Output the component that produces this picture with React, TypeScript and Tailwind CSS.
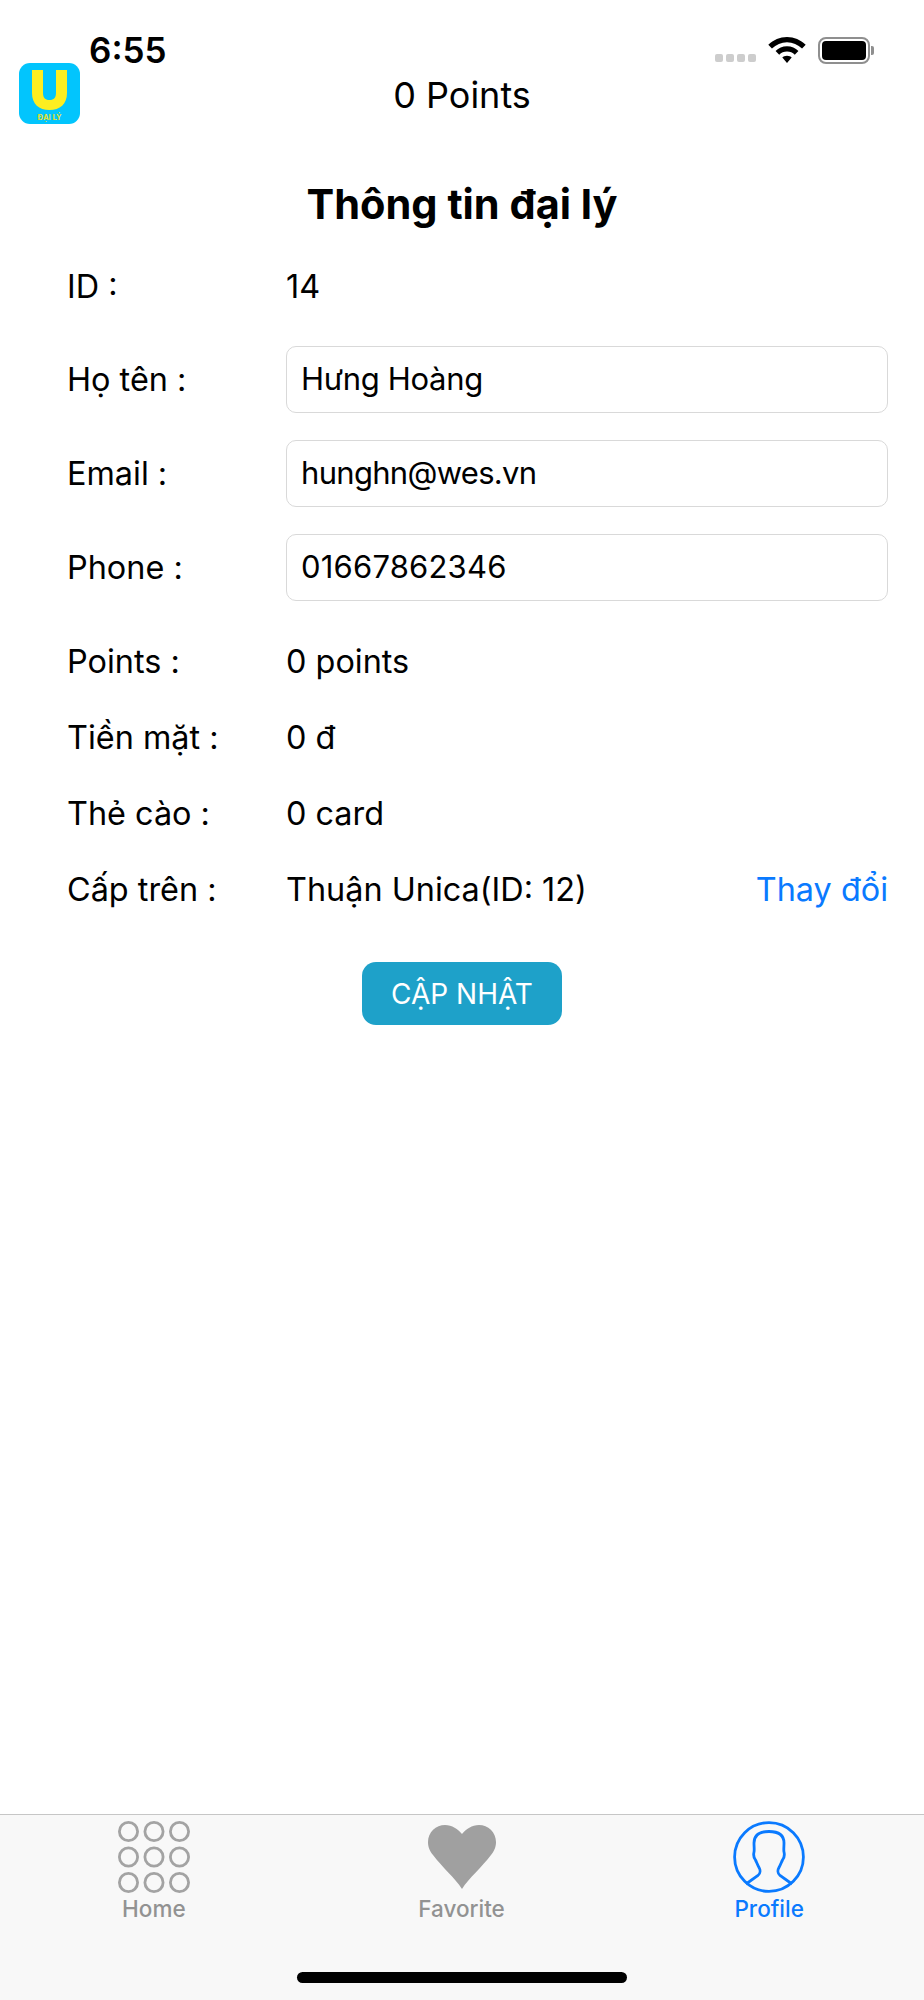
const font = { fontFamily: 'Inter, "Noto Sans", sans-serif' };

function Row({ label, children, className = "" }: { label: string; children: React.ReactNode; className?: string }) {
  return (
    <div className={`flex items-center ${className}`}>
      <div className="w-[219px] shrink-0 pl-[67px] box-content text-[32.4px] leading-[40px] text-black -mr-[67px]">{label}</div>
      <div className="ml-[67px] flex-1 flex items-center text-[32.4px] leading-[40px] text-black">{children}</div>
    </div>
  );
}

function Field({ value, className = "" }: { value: string; className?: string }) {
  return (
    <div className={`w-[602px] h-[67px] border border-[#d9d9d9] rounded-[10px] pl-[14px] pb-[2px] flex items-center bg-white text-[31px] text-black ${className}`}>{value}</div>
  );
}

function HomeIcon() {
  const c = [0, 1, 2];
  return (
    <svg width="72" height="72" viewBox="0 0 72 72" fill="none" stroke="#a3a3a3" strokeWidth="2.8">
      {c.map((r) => c.map((k) => <circle key={`${r}${k}`} cx={10.5 + k * 25.5} cy={10.5 + r * 25.5} r="9.1" />))}
    </svg>
  );
}

function HeartIcon() {
  return (
    <svg width="68" height="64" viewBox="0 0 68 64" fill="#a0a0a0">
      <path d="M34 64C27 53 14 42 5 30C1 25 0 21 0 17C0 7 8 0 17 0C24 0 30 4 34 9C38 4 44 0 51 0C60 0 68 7 68 17C68 21 67 25 63 30C54 42 41 53 34 64Z" />
    </svg>
  );
}

function ProfileIcon() {
  return (
    <svg width="72" height="72" viewBox="0 0 72 72" fill="none" stroke="#0a7aff" strokeWidth="2.8">
      <circle cx="36" cy="36" r="34.4" />
      <path d="M13 63L25 54.5C27.5 52.5 27.5 49 26 46.5C24.5 44 23.5 41 22.5 39C21 37 20.5 33 21 31C21.5 29 21 26 21 22C21 14 26 10.5 36 10.5C46 10.5 51 14 51 22C51 26 50.5 29 51 31C51.5 33 51 37 49.5 39C48.5 41 47.5 44 46 46.5C44.5 49 44.5 52.5 47 54.5L59 63" />
    </svg>
  );
}

function Tab({ icon, label, active = false }: { icon: React.ReactNode; label: string; active?: boolean }) {
  return (
    <div className="flex-1 flex flex-col items-center">
      <div className="h-[72px] flex items-center justify-center">{icon}</div>
      <div className={`mt-[3px] text-[22.5px] leading-[26px] font-medium ${active ? "text-[#0a7aff]" : "text-[#929292]"}`}>{label}</div>
    </div>
  );
}

export default function App() {
  return (
    <div style={font} className="w-[924px] h-[2000px] bg-white flex flex-col overflow-hidden">
      <div className="h-[63px] shrink-0 flex justify-between pl-[89px] pr-[50px]">
        <div className="mt-[28px] text-[35px] leading-[44px] font-semibold text-black h-[35px]">6:55</div>
        <div className="mt-[34px] flex items-center h-[32px] gap-[12px]">
          <div className="flex gap-[3px] mt-[16px]">
            {[0, 1, 2, 3].map((i) => <div key={i} className="w-[8px] h-[8px] rounded-[2px] bg-[#cdcdcd]" />)}
          </div>
          <svg width="38" height="27" viewBox="0 0 36 26" fill="black">
            <path d="M18 0C11 0 5 2.800 0 7.500L3.500 11C7.500 7.300 12.500 5 18 5C23.500 5 28.500 7.300 32.500 11L36 7.500C31 2.800 25 0 18 0Z" />
            <path d="M18 9C13.500 9 10 10.700 7 13.500L10.500 17C12.500 15.200 15 14 18 14C21 14 23.500 15.200 25.500 17L29 13.500C26 10.700 22.500 9 18 9Z" />
            <path d="M18 18C16 18 14.500 18.700 13.500 19.800L18 25L22.500 19.800C21.500 18.700 20 18 18 18Z" />
          </svg>
          <div className="flex items-center">
            <div className="w-[52px] h-[27px] border-[2px] border-[#8f8f8f] rounded-[8px] p-[2px]">
              <div className="w-full h-full bg-black rounded-[4px]" />
            </div>
            <div className="w-[3px] h-[9px] bg-[#8f8f8f] rounded-r-[2px] ml-[1px]" />
          </div>
        </div>
      </div>

      <div className="h-[61px] shrink-0 relative flex items-center pl-[19px]">
        <svg width="61" height="61" viewBox="0 0 61 61">
          <rect width="61" height="61" rx="11" fill="#02c5fd" />
          <path d="M13 7V30C13 41 20 47 30.500 47C41 47 48 41 48 30V7H37V30C37 34.500 35 37 30.500 37C26 37 24 34.500 24 30V7Z" fill="#fdee21" />
          <text x="30.500" y="57" textAnchor="middle" fontSize="7.500" fontWeight="700" fill="#e6e02a">ĐẠI LÝ</text>
        </svg>
        <div className="absolute left-0 right-0 top-0 text-center text-[36px] leading-[64px] text-black">0 Points</div>
      </div>

      <h1 className="mt-[56px] text-center text-[41.5px] leading-[48px] font-bold text-black">Thông tin đại lý</h1>

      <div className="mt-[29px] flex flex-col">
        <Row label="ID :" className="h-[60px]">14</Row>
        <Row label="Họ tên :" className="mt-[29px]"><Field value="Hưng Hoàng" className="tracking-[-0.3px]" /></Row>
        <Row label="Email :" className="mt-[27px]"><Field value="hunghn@wes.vn" className="tracking-[-0.7px]" /></Row>
        <Row label="Phone :" className="mt-[27px]"><Field value="01667862346" className="tracking-[0.2px]" /></Row>
        <Row label="Points :" className="mt-[31px] h-[60px]">0 points</Row>
        <Row label="Tiền mặt :" className="mt-[16px] h-[60px]">0 đ</Row>
        <Row label="Thẻ cào :" className="mt-[16px] h-[60px]">0 card</Row>
        <Row label="Cấp trên :" className="mt-[16px] h-[60px]">
          <span>Thuận Unica(ID: 12)</span>
          <span className="ml-auto mr-[36px] text-[#0a7aff]">Thay đổi</span>
        </Row>
      </div>

      <div className="mt-[42px] flex justify-center">
        <button className="w-[200px] h-[63px] rounded-[14px] bg-[#1ea1c9] text-white text-[28px] leading-none">CẬP NHẬT</button>
      </div>

      <div className="flex-1" />

      <div className="h-[186px] shrink-0 bg-[#f8f8f8] border-t border-[#c6c6c6] flex flex-col">
        <div className="flex pt-[6px] pr-[1px]">
          <Tab icon={<HomeIcon />} label="Home" />
          <Tab icon={<HeartIcon />} label="Favorite" />
          <Tab icon={<ProfileIcon />} label="Profile" active />
        </div>
        <div className="mt-[50px] mx-auto w-[330px] h-[11px] rounded-full bg-black" />
      </div>
    </div>
  );
}
